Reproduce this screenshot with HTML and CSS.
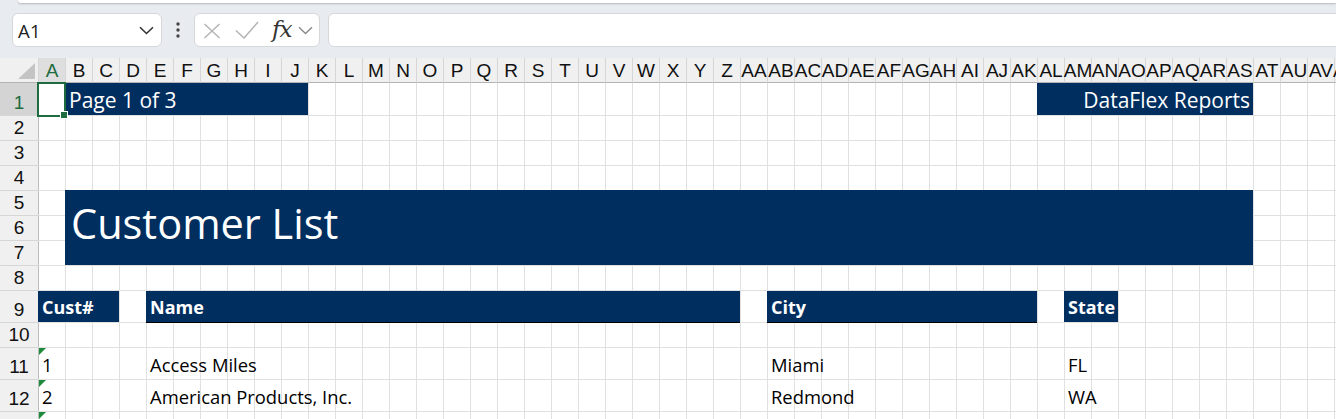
FILE: index.html
```html
<!DOCTYPE html>
<html lang="en">
<head>
<meta charset="utf-8">
<title>Customer List</title>
<link rel="stylesheet" href="styles.css">
</head>
<body>
<div class="app">
  <header class="toolbar">
    <div class="ribbon-edge"></div>
    <div class="fbar-row">
      <div class="namebox">
        <span class="nb-text">A1</span>
        <svg class="nb-chev" width="15" height="9" viewBox="0 0 15 9"><path d="M1 1.2 L7.5 7.5 L14 1.2" fill="none" stroke="#333" stroke-width="1.6"/></svg>
      </div>
      <div class="grip">
        <svg width="4" height="16" viewBox="0 0 4 16"><circle cx="2" cy="2" r="1.7" fill="#444"/><circle cx="2" cy="8" r="1.7" fill="#444"/><circle cx="2" cy="14" r="1.7" fill="#444"/></svg>
      </div>
      <div class="fbtns">
        <svg class="ic-x" width="18" height="16" viewBox="0 0 18 16"><path d="M1.5 1 L16.5 15 M16.5 1 L1.5 15" fill="none" stroke="#b4b4b4" stroke-width="1.5"/></svg>
        <svg class="ic-ok" width="24" height="18" viewBox="0 0 24 18"><path d="M1 9.5 L9 17 L23 1" fill="none" stroke="#b4b4b4" stroke-width="1.5"/></svg>
        <span class="fx">fx</span>
        <svg class="ic-chev" width="15" height="9" viewBox="0 0 15 9"><path d="M1 1.2 L7.5 7.5 L14 1.2" fill="none" stroke="#8a8a8a" stroke-width="1.4"/></svg>
      </div>
      <div class="formula"></div>
    </div>
  </header>

  <main class="sheet">
    <div class="corner"><span class="corner-tri"></span></div>
    <div class="ch ch-sel">A</div><div class="ch">B</div><div class="ch">C</div><div class="ch">D</div><div class="ch">E</div><div class="ch">F</div><div class="ch">G</div><div class="ch">H</div><div class="ch">I</div><div class="ch">J</div><div class="ch">K</div><div class="ch">L</div><div class="ch">M</div><div class="ch">N</div><div class="ch">O</div><div class="ch">P</div><div class="ch">Q</div><div class="ch">R</div><div class="ch">S</div><div class="ch">T</div><div class="ch">U</div><div class="ch">V</div><div class="ch">W</div><div class="ch">X</div><div class="ch">Y</div><div class="ch">Z</div><div class="ch">AA</div><div class="ch">AB</div><div class="ch">AC</div><div class="ch">AD</div><div class="ch">AE</div><div class="ch">AF</div><div class="ch">AG</div><div class="ch">AH</div><div class="ch">AI</div><div class="ch">AJ</div><div class="ch">AK</div><div class="ch">AL</div><div class="ch">AM</div><div class="ch">AN</div><div class="ch">AO</div><div class="ch">AP</div><div class="ch">AQ</div><div class="ch">AR</div><div class="ch">AS</div><div class="ch">AT</div><div class="ch">AU</div><div class="ch">AV</div><div class="ch">AW</div>

    <div class="rh rh-sel y1">1</div>
    <div class="rh y2">2</div>
    <div class="rh y3">3</div>
    <div class="rh y4">4</div>
    <div class="rh y5">5</div>
    <div class="rh y6">6</div>
    <div class="rh y7">7</div>
    <div class="rh y8">8</div>
    <div class="rh y9">9</div>
    <div class="rh y10">10</div>
    <div class="rh y11">11</div>
    <div class="rh y12">12</div>
    <div class="rh y13">13</div>

    <div class="bg y1"></div>
    <div class="bg y2"></div>
    <div class="bg y3"></div>
    <div class="bg y4"></div>
    <div class="bg y5"></div>
    <div class="bg y6"></div>
    <div class="bg y7"></div>
    <div class="bg y8"></div>
    <div class="bg y9"></div>
    <div class="bg y10"></div>
    <div class="bg y11"></div>
    <div class="bg y12"></div>
    <div class="bg y13"></div>

    <div class="cell fill banner x-b-j y1">Page 1 of 3</div>
    <div class="cell fill banner right x-al-as y1">DataFlex Reports</div>
    <div class="cell fill title x-b-as y5-7">Customer List</div>

    <div class="cell fill head x-a-c y9">Cust#</div>
    <div class="cell fill head ruled x-e-z y9">Name</div>
    <div class="cell fill head ruled x-ab-ak y9">City</div>
    <div class="cell fill head x-am-an y9">State</div>

    <div class="cell data err x-a y11">1</div>
    <div class="cell data x-e-z y11">Access Miles</div>
    <div class="cell data x-ab-ak y11">Miami</div>
    <div class="cell data x-am-an y11">FL</div>

    <div class="cell data err x-a y12">2</div>
    <div class="cell data x-e-z y12">American Products, Inc.</div>
    <div class="cell data x-ab-ak y12">Redmond</div>
    <div class="cell data x-am-an y12">WA</div>

    <div class="cell data err x-a y13"></div>

    <div class="selection x-a y1"></div>
  </main>
</div>
</body>
</html>
```

FILE: styles.css
```css
* { box-sizing: border-box; }

html, body {
  margin: 0;
  padding: 0;
  width: 1336px;
  height: 419px;
  overflow: hidden;
  background: #ffffff;
}

.app {
  width: 1336px;
  height: 419px;
  overflow: hidden;
  font-family: "Open Sans", "Noto Sans", sans-serif;
}

/* ---------- formula bar area ---------- */
.toolbar {
  height: 58px;
  background: #e8ebf0;
  display: flex;
  flex-direction: column;
}

.ribbon-edge {
  height: 3px;
  margin-left: 18px;
  background: #ffffff;
  border-bottom-left-radius: 6px;
  box-shadow: 0 1px 2px rgba(0, 0, 0, 0.22);
}

.fbar-row {
  display: flex;
  align-items: stretch;
  height: 34px;
  margin-top: 10px;
  padding-left: 12px;
}

.namebox {
  width: 150px;
  background: #ffffff;
  border: 1px solid #d5d7db;
  border-radius: 6px;
  display: flex;
  align-items: center;
  justify-content: space-between;
  padding: 0 7px 0 5px;
}

.nb-text {
  font-size: 18.5px;
  color: #222;
  letter-spacing: 0.3px;
}

.grip {
  width: 32px;
  display: flex;
  align-items: center;
  justify-content: center;
}

.fbtns {
  width: 126px;
  background: #ffffff;
  border: 1px solid #d5d7db;
  border-radius: 6px;
  display: flex;
  align-items: center;
  padding-left: 8px;
}

.ic-x { margin-right: 14px; margin-top: 1px; }
.ic-ok { margin-right: 13px; margin-top: -1px; }

.fx {
  font-family: "DejaVu Serif", "Liberation Serif", serif;
  font-style: italic;
  font-size: 23px;
  color: #333;
  letter-spacing: -1px;
  margin-right: 7px;
  margin-top: -3px;
}

.ic-chev { margin-top: 1px; }

.formula {
  flex: 1;
  margin-left: 8px;
  margin-right: -8px;
  background: #ffffff;
  border: 1px solid #d5d7db;
  border-radius: 6px;
}

/* ---------- sheet grid ---------- */
.sheet {
  display: grid;
  grid-template-columns: 38px repeat(49, 27px);
  grid-template-rows: 25px 33px repeat(7, 25px) 32px 25px 32px 32px 32px;
  font-family: "Open Sans", "Noto Sans", sans-serif;
}

.corner {
  grid-column: 1;
  grid-row: 1;
  background: #f0f0f0;
  border-bottom: 1px solid #b4b4b4;
  position: relative;
}

.corner-tri {
  position: absolute;
  right: 3px;
  bottom: 3px;
  width: 0;
  height: 0;
  border-left: 17px solid transparent;
  border-bottom: 16px solid #c4c4c4;
}

.ch {
  grid-row: 1;
  background: #f0f0f0;
  border-left: 1px solid #d6d6d6;
  border-bottom: 1px solid #b4b4b4;
  display: flex;
  align-items: center;
  justify-content: center;
  font-family: "Liberation Sans", Arial, sans-serif;
  font-size: 19px;
  color: #111;
  white-space: nowrap;
  padding-top: 1px;
}

.ch-sel {
  background: #dedede;
  color: #1d6b3f;
}

.rh {
  grid-column: 1;
  background: #f0f0f0;
  border-bottom: 1px solid #d6d6d6;
  display: flex;
  align-items: flex-end;
  justify-content: center;
  padding-bottom: 2px;
  font-family: "Liberation Sans", Arial, sans-serif;
  font-size: 19px;
  color: #111;
  line-height: 20px;
}

.rh-sel {
  background: #d4d4d4;
  color: #1d6b3f;
}

.bg {
  grid-column: 2 / -1;
  border-bottom: 1px solid #e0e0e0;
  background:
    linear-gradient(#bdbdbd, #bdbdbd) 0 0 / 1px 100% no-repeat,
    repeating-linear-gradient(90deg, #e0e0e0 0 1px, transparent 1px 27px);
}

/* rows */
.y1 { grid-row: 2; }
.y2 { grid-row: 3; }
.y3 { grid-row: 4; }
.y4 { grid-row: 5; }
.y5 { grid-row: 6; }
.y6 { grid-row: 7; }
.y7 { grid-row: 8; }
.y8 { grid-row: 9; }
.y9 { grid-row: 10; }
.y10 { grid-row: 11; }
.y11 { grid-row: 12; }
.y12 { grid-row: 13; }
.y13 { grid-row: 14; }
.y5-7 { grid-row: 6 / 9; }

/* column spans */
.x-a { grid-column: 2 / 3; }
.x-a-c { grid-column: 2 / 5; }
.x-b-j { grid-column: 3 / 12; }
.x-b-as { grid-column: 3 / 47; }
.x-e-z { grid-column: 6 / 28; }
.x-ab-ak { grid-column: 29 / 39; }
.x-al-as { grid-column: 39 / 47; }
.x-am-an { grid-column: 40 / 42; }

/* cells */
.cell {
  display: flex;
  align-items: center;
  white-space: nowrap;
  padding-left: 4px;
  position: relative;
  margin-bottom: 1px;
}

.fill {
  background: #002e5f;
  color: #ffffff;
}

.banner {
  font-size: 21px;
  padding-top: 1px;
}

.right {
  justify-content: flex-end;
  padding-right: 3px;
}

.title {
  font-size: 41.5px;
  padding-left: 6px;
  padding-bottom: 10px;
  margin-top: -1px;
}

.head {
  font-size: 18px;
  font-weight: 700;
  padding-left: 4px;
}

.ruled {
  border-bottom: 1px solid #000;
  margin-bottom: 0;
}

.data {
  font-size: 18.4px;
  color: #000;
  padding-top: 2px;
}

.err::before {
  content: "";
  position: absolute;
  left: 1px;
  top: 0;
  width: 0;
  height: 0;
  border-top: 7px solid #1f8a3b;
  border-right: 7px solid transparent;
}

.selection {
  border: 2px solid #1d6b3f;
  margin: -1px -1px -1px -1px;
  position: relative;
}

.selection::after {
  content: "";
  position: absolute;
  right: -4px;
  bottom: -4px;
  width: 6px;
  height: 6px;
  background: #1d6b3f;
  border: 1px solid #ffffff;
}
```
